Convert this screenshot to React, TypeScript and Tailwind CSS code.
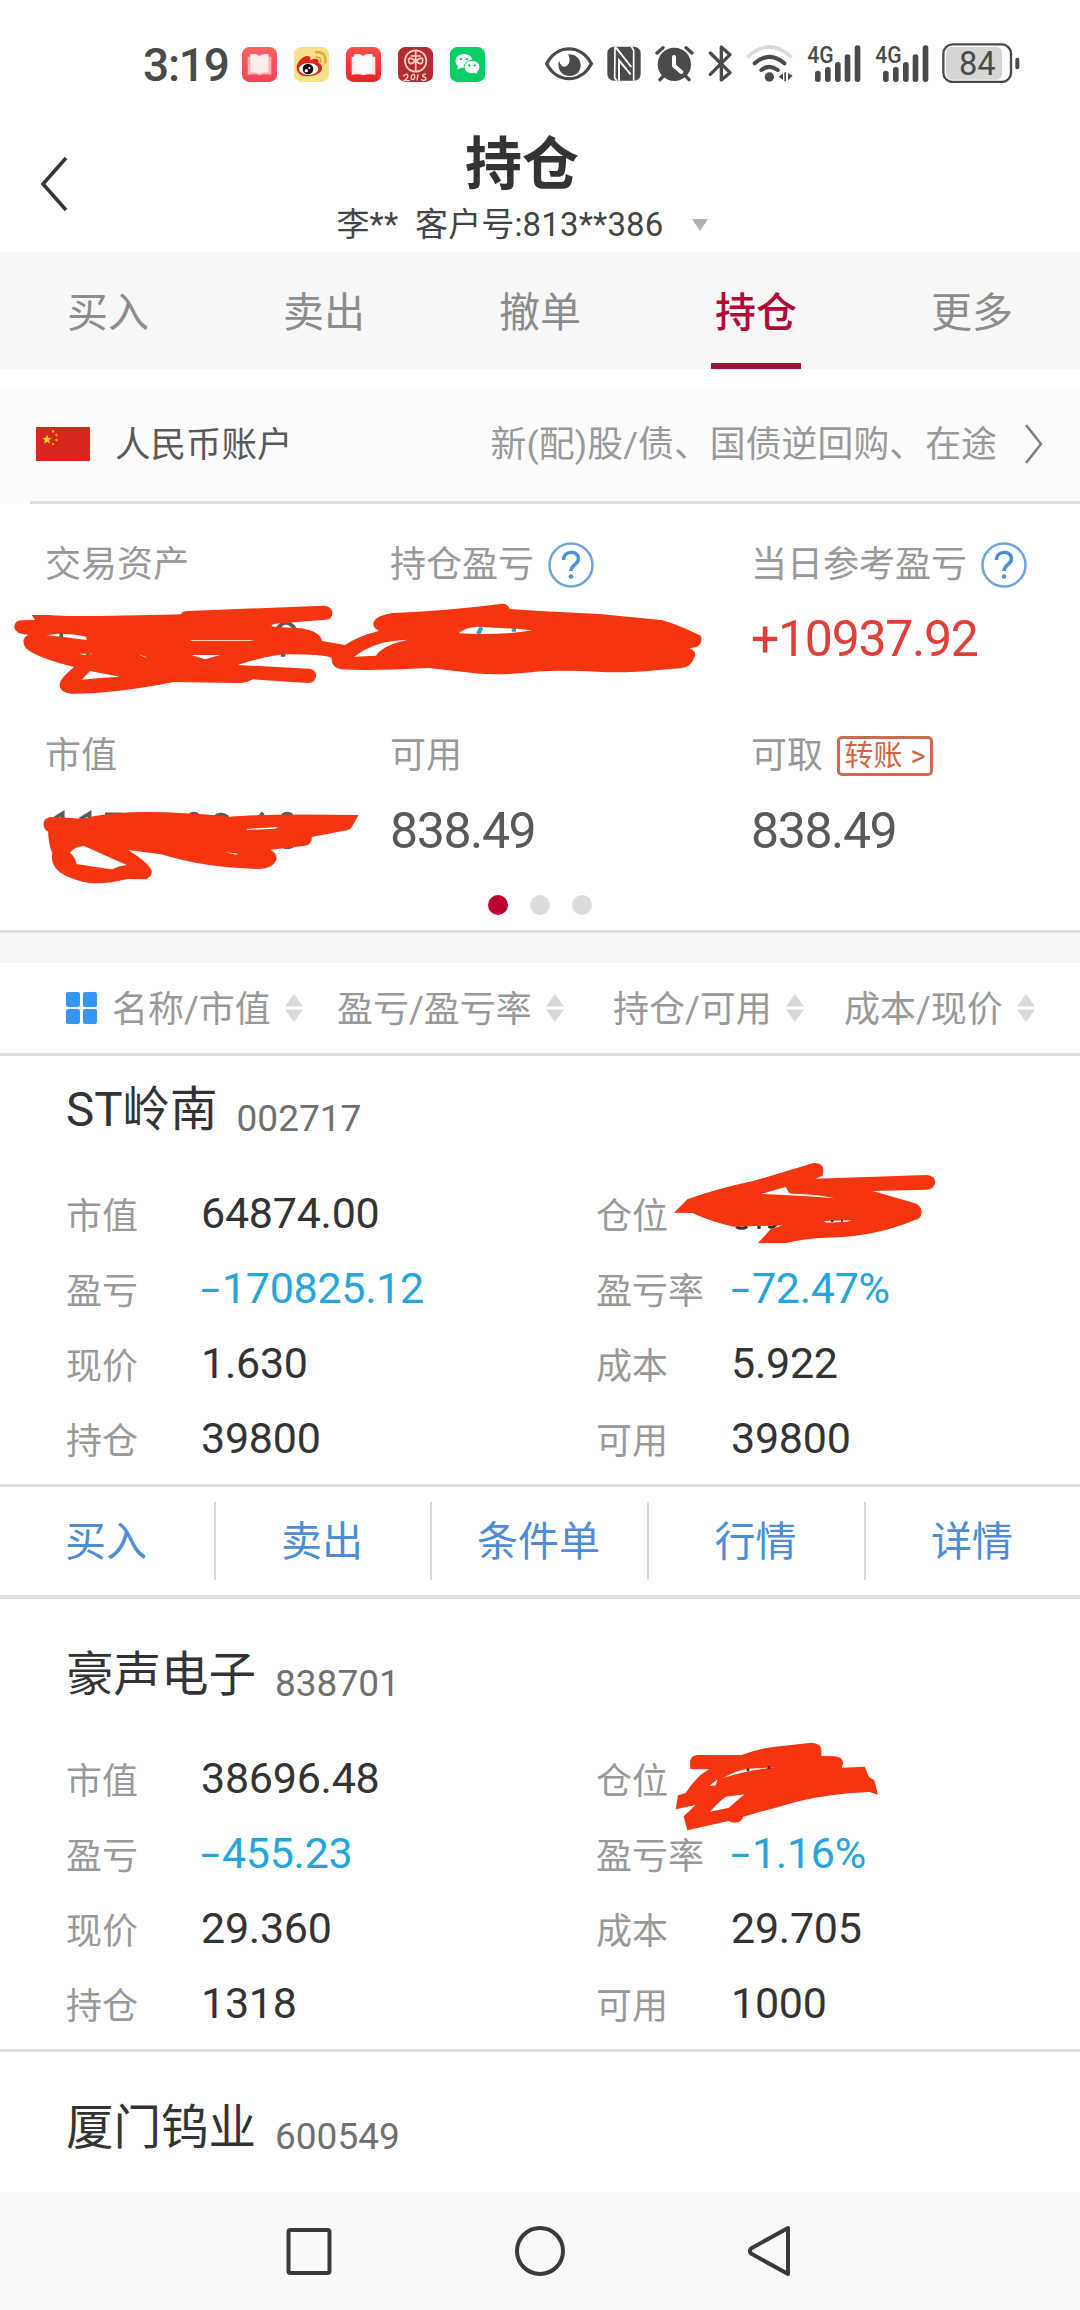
import type { ReactNode } from 'react';

const tabs = ['买入', '卖出', '撤单', '持仓', '更多'];

const columns = [
  { label: '名称/市值', width: 'w-[225px]' },
  { label: '盈亏/盈亏率', width: 'w-[276px]' },
  { label: '持仓/可用', width: 'w-[231px]' },
  { label: '成本/现价', width: 'w-[200px]' },
];

const actions = ['买入', '卖出', '条件单', '行情', '详情'];

const holdings = [
  {
    name: 'ST岭南',
    code: '002717',
    rows: [
      ['市值', '64874.00', '仓位', ''],
      ['盈亏', '-170825.12', '盈亏率', '-72.47%'],
      ['现价', '1.630', '成本', '5.922'],
      ['持仓', '39800', '可用', '39800'],
    ],
  },
  {
    name: '豪声电子',
    code: '838701',
    rows: [
      ['市值', '38696.48', '仓位', ''],
      ['盈亏', '-455.23', '盈亏率', '-1.16%'],
      ['现价', '29.360', '成本', '29.705'],
      ['持仓', '1318', '可用', '1000'],
    ],
  },
];

function BookIcon({ from, to, page }: { from: string; to: string; page: string }) {
  const id = `book-${from.slice(1)}`;
  return (
    <svg viewBox="0 0 105 105" className="size-[35px]">
      <defs>
        <linearGradient id={id} x1="0" y1="0" x2="0" y2="1">
          <stop offset="0" stopColor={from} />
          <stop offset="1" stopColor={to} />
        </linearGradient>
      </defs>
      <rect width="105" height="105" rx="22" fill={`url(#${id})`} />
      <path d="M17 29 L24 29 L25 22 Q42 18 52 27 Q62 18 79 22 L81 29 L88 29 V83 Q66 80 52 85 Q38 80 17 83Z" fill={page} />
      <path d="M25 22 Q42 18 52 27 Q62 18 79 22 V76 Q62 74 52 80 Q42 74 25 76Z" fill="#fff" fillOpacity="0.75" />
    </svg>
  );
}

function WeiboIcon() {
  return (
    <svg viewBox="0 0 105 105" className="size-[35px]">
      <rect width="105" height="105" rx="22" fill="#fbe08a" />
      <path d="M8 62 C8 42 32 22 45 28 C52 31 47 39 50 40 C60 32 77 33 73 47 C92 55 90 84 44 88 C22 89 8 78 8 62Z" fill="#e2231a" />
      <ellipse cx="44" cy="66" rx="29" ry="18" fill="#fff" />
      <circle cx="42" cy="66" r="16" fill="#111" />
      <circle cx="37" cy="71" r="5" fill="#fff" />
      <circle cx="46" cy="63" r="3" fill="#fff" />
      <path d="M66 15 Q98 14 94 47" fill="none" stroke="#e8a33d" strokeWidth="7" strokeLinecap="round" />
      <path d="M67 31 Q82 29 80 45" fill="none" stroke="#e8a33d" strokeWidth="6" strokeLinecap="round" />
    </svg>
  );
}

function UnionIcon() {
  return (
    <svg viewBox="0 0 105 105" className="size-[35px]">
      <rect width="105" height="105" rx="22" fill="#b42b36" />
      <g fill="none" stroke="#ffd9bd" strokeWidth="5">
        <circle cx="53" cy="42" r="32" />
        <path d="M53 10V74M38 27H68M53 42 Q30 25 32 42 Q34 58 53 42 Q76 25 74 42 Q72 58 53 42" />
        <path d="M16 88 Q26 78 29 84 Q32 92 19 101 H36 M42 84 Q36 98 44 98 Q52 96 50 84 Q46 80 42 84 M60 82 L57 100 M84 82 Q72 80 74 88 Q88 92 82 99 Q72 102 70 96" strokeWidth="4" />
      </g>
    </svg>
  );
}

function WechatIcon() {
  return (
    <svg viewBox="0 0 105 105" className="size-[35px]">
      <rect width="105" height="105" rx="22" fill="#06cf63" />
      <ellipse cx="42" cy="42" rx="26" ry="21" fill="#fff" />
      <path d="M24 54 L22 68 L36 61Z" fill="#fff" />
      <ellipse cx="66" cy="60" rx="24" ry="20" fill="#fff" stroke="#06cf63" strokeWidth="3" />
      <path d="M72 76 L82 82 L80 70Z" fill="#fff" />
      <circle cx="33" cy="36" r="4" fill="#06cf63" />
      <circle cx="51" cy="36" r="4" fill="#06cf63" />
      <circle cx="58" cy="55" r="3.5" fill="#06cf63" />
      <circle cx="74" cy="55" r="3.5" fill="#06cf63" />
    </svg>
  );
}

function SignalIcon() {
  return (
    <svg viewBox="862 25 162 135" className="-mt-[5px] h-[45px] w-[54px] overflow-visible fill-[#4a4a4a]">
      <text x="863" y="101" textLength="79" lengthAdjust="spacingAndGlyphs" className="font-medium" fontSize="71">
        4G
      </text>
      <rect x="886" y="123" width="17" height="34" rx="8" />
      <rect x="916" y="112" width="17" height="45" rx="8" />
      <rect x="946" y="97" width="17" height="60" rx="8" />
      <rect x="975" y="74" width="17" height="83" rx="8" />
      <rect x="1005" y="47" width="17" height="110" rx="8" />
    </svg>
  );
}

function StatusBar() {
  return (
    <div className="flex h-[110px] items-start pl-[143px] pt-[43px] text-[#4a4a4a]">
      <span className="w-[99px] text-[46px] font-medium leading-[45px] tracking-[-1.2px]">3:19</span>
      <div className="flex gap-[17px] pt-[4px]">
        <BookIcon from="#f8625f" to="#f0465a" page="#fbb3b4" />
        <WeiboIcon />
        <BookIcon from="#f5504c" to="#ea2226" page="#ffe9e6" />
        <UnionIcon />
        <WechatIcon />
      </div>
      {/* eye comfort */}
      <svg viewBox="74 40 144 120" className="ml-[60px] h-[40px] w-[48px]">
        <path d="M79 102 C110 43 182 43 213 102 C182 162 110 162 79 102Z" fill="none" stroke="#4a4a4a" strokeWidth="10" />
        <path d="M143 74 C166 73 181 88 181 107 C181 126 167 139 148 139 C129 139 114 126 114 104 C114 98 116 96 117 94 C120 110 130 113 137 110 C150 104 150 86 143 74Z" fill="#4a4a4a" />
      </svg>
      {/* nfc */}
      <svg viewBox="261 40 102 120" className="ml-[14px] h-[40px] w-[34px]">
        <rect x="262" y="51" width="100" height="102" rx="20" fill="#4a4a4a" />
        <path d="M285 51 L284 144 L290 153 M334 51 L341 62 V153" stroke="#fff" strokeWidth="5" fill="none" />
        <path d="M297 153 V92 L332 134 M288 54 L334 112" stroke="#fff" strokeWidth="6" fill="none" />
      </svg>
      {/* alarm */}
      <svg viewBox="406 40 117 120" className="ml-[14px] h-[40px] w-[39px]">
        <circle cx="464" cy="104" r="50" fill="#4a4a4a" />
        <path d="M463 82 V108 L485 127" stroke="#fff" strokeWidth="12" fill="none" strokeLinecap="round" strokeLinejoin="round" />
        <path d="M412 70 L430 54 M517 70 L499 54 M421 150 L432 138 M508 150 L497 138" stroke="#4a4a4a" strokeWidth="10" strokeLinecap="round" />
      </svg>
      {/* bluetooth */}
      <svg viewBox="564 40 72 120" className="ml-[14px] h-[40px] w-[24px]">
        <path d="M571 70 L630 129 L604 151 V52 L630 75 L571 134" stroke="#4a4a4a" strokeWidth="10" fill="none" strokeLinecap="round" strokeLinejoin="round" />
      </svg>
      {/* wifi */}
      <svg viewBox="679 40 141 120" className="ml-[14px] h-[40px] w-[47px]">
        <path d="M686 80 Q749 24 812 80" stroke="#dadada" strokeWidth="11" fill="none" strokeLinecap="round" />
        <path d="M705 101 Q749 62 794 101 M725 121 Q749 102 774 121" stroke="#4a4a4a" strokeWidth="12" fill="none" strokeLinecap="round" />
        <circle cx="749" cy="142" r="14" fill="#4a4a4a" />
        <path d="M777 141 L790 131 V151Z M819 138 L805 130 V152Z M794 128 h5 v27 h-5Z" fill="#4a4a4a" />
      </svg>
      <div className="ml-[14px] flex gap-[14px]">
        <SignalIcon />
        <SignalIcon />
      </div>
      {/* battery */}
      <svg viewBox="1270 40 234 120" className="ml-[13px] h-[40px] w-[78px]">
        <rect x="1282" y="52" width="168" height="98" rx="16" fill="#d6d6d6" />
        <rect x="1274" y="44" width="203" height="113" rx="28" fill="none" stroke="#4a4a4a" strokeWidth="7" />
        <rect x="1490" y="84" width="12" height="35" rx="6" fill="#4a4a4a" />
        <text x="1376" y="136" textAnchor="middle" fontSize="98" fill="#4a4a4a">
          84
        </text>
      </svg>
    </div>
  );
}

function Header() {
  return (
    <header className="flex h-[142px] items-start">
      <svg viewBox="0 0 30 60" className="ml-[38px] mt-[44px] h-[60px] w-[30px] shrink-0">
        <path d="M28 4 L5 30 L28 56" fill="none" stroke="#333" strokeWidth="3.500" />
      </svg>
      <div className="flex w-[908px] flex-col items-center">
        <h1 className="mt-[20px] h-[70px] text-[57px] font-bold leading-[70px] text-[#333]">持仓</h1>
        <div className="mt-[1px] flex items-center text-[33px] leading-[47px] text-[#444]">
          <span className="tracking-[0.15px]">李**&nbsp; 客户号:813**386</span>
          <svg viewBox="0 0 16 12" className="ml-[28px] h-[12px] w-[16px]">
            <path d="M0 0H16L8 12Z" fill="#b0b0b0" />
          </svg>
        </div>
      </div>
    </header>
  );
}

function TabBar() {
  return (
    <nav className="grid h-[117px] grid-cols-5 bg-[#f7f7f7] text-[41px]">
      {tabs.map((tab) => (
        <div key={tab} className="flex flex-col items-center">
          <span className={`h-[111px] leading-[122px] ${tab === '持仓' ? 'font-medium text-[#b10a38]' : 'text-[#8c8c8c]'}`}>{tab}</span>
          {tab === '持仓' && <span className="h-[6px] w-[90px] bg-[#a80c32]" />}
        </div>
      ))}
    </nav>
  );
}

function AccountRow() {
  return (
    <div className="mt-[18px] bg-[#fcfcfc]">
      <div className="flex h-[114px] items-center pl-[36px] text-[35.5px]">
        <svg viewBox="0 0 54 34" className="h-[34px] w-[54px]">
          <rect width="54" height="34" fill="#d9261c" />
          <path d="M11 7.5l1.3 3.2 3.4.2-2.6 2.2.9 3.4-3-1.8-3 1.8.9-3.4-2.6-2.2 3.4-.2z" fill="#fbd21b" />
          <g fill="#f5b81b">
            <circle cx="17" cy="4.5" r="1.2" />
            <circle cx="20.500" cy="8" r="1.200" />
            <circle cx="20.500" cy="13" r="1.200" />
            <circle cx="17" cy="17" r="1.200" />
          </g>
        </svg>
        <span className="ml-[25px] pt-[4px] text-[#595959]">人民币账户</span>
        <span className="ml-auto pt-[4px] text-[35.8px] tracking-[0.1px] text-[#999]">新(配)股/债、国债逆回购、在途</span>
        <svg viewBox="0 0 22 42" className="ml-[26px] mr-[35px] h-[42px] w-[22px]">
          <path d="M3 2 L18 21 L3 40" fill="none" stroke="#808080" strokeWidth="2.5" />
        </svg>
      </div>
      <div className="ml-[30px] h-[3px] bg-[#dedede]" />
    </div>
  );
}

function HelpIcon() {
  return (
    <svg viewBox="0 0 46 46" className="ml-[14px] size-[46px]">
      <circle cx="23" cy="23" r="21.500" fill="none" stroke="#6fa3dc" strokeWidth="2.500" />
      <path d="M15.500 18 C15.500 8 30.500 8 30.500 17 C30.500 22 23 23 23 29" fill="none" stroke="#4a8fdc" strokeWidth="3.500" />
      <circle cx="23" cy="34.500" r="2.300" fill="#4a8fdc" />
    </svg>
  );
}

function SummaryLabel({ children }: { children: ReactNode }) {
  return <div className="flex h-[60px] items-center whitespace-nowrap text-[36px] text-[#999]">{children}</div>;
}

/* hand-drawn redaction over the asset figures */
function SummaryScribble() {
  return (
    <svg viewBox="0 0 1030 300" className="absolute left-0 top-[86px] h-[300px] w-[1030px]" fill="#f53510">
      <g transform="translate(0 0) scale(0.3444 0.3333)">
        <g stroke="#5a5a5a" strokeWidth="11" fill="none">
          <path d="M178 125V150M806 115 Q830 82 856 115" />
          <path d="M255 185V197M815 195H828" />
          <path d="M160 684 L182 670V690M232 688 L260 670V690M305 673H355M552 676 Q562 666 575 676M622 682 Q641 664 662 682M755 680L764 668M820 676Q834 666 848 676M820 768 Q834 776 850 768" />
        </g>
        <path d="M1398 112L1388 132M1492 112V125" stroke="#2e9fd8" strokeWidth="12" />
        <path
          fillRule="evenodd"
          d="M92 75 L145 75 Q200 82 525 73 Q530 63 545 63 L940 47 Q965 50 965 68 Q965 88 945 89 L800 101 Q780 106 795 110 L875 115 Q930 125 935 153 L1002 165 Q1040 138 1100 123 Q1080 112 1085 95 Q1095 76 1140 69 Q1300 62 1460 41 Q1475 42 1480 57 L1568 63 L1740 72 L1920 90 Q1960 100 2036 138 Q2040 165 2020 172 L2002 175 Q2024 185 2017 200 Q2008 232 1975 235 L1910 240 Q1850 248 1760 247 Q1640 240 1568 244 Q1450 258 1380 250 L1245 234 Q1080 243 990 238 Q960 230 963 203 Q930 193 840 193 Q790 192 690 225 L900 236 Q918 240 918 257 Q915 278 895 279 L735 268 Q715 280 690 279 L505 276 Q330 312 205 311 Q172 306 173 283 Q175 265 215 231 Q110 205 75 175 Q58 148 82 134 Q45 134 41 112 Q42 92 62 91 L102 90Z
             M168 131 Q215 131 250 140 L252 150 Q195 142 135 136Z
             M228 191 L268 191 L250 196Z
             M400 192 L430 203 Q415 202 400 192Z
             M555 195 L640 195 L595 208Z
             M553 150 H740 L725 152 H553Z
             M262 243 L347 260 Q290 263 237 269Z
             M1028 200 Q1080 160 1142 153 L1185 149 Q1110 165 1092 197Z
             M1332 130 Q1350 112 1385 110 L1510 117 L1545 121 Q1450 137 1332 130Z"
        />
        <path
          fillRule="evenodd"
          d="M126 702 Q128 680 155 681 L240 686 Q300 671 380 667 Q500 663 665 680 Q780 670 1041 675 L1022 710 Q1015 721 995 723 L905 741 Q908 765 880 768 L785 779 Q805 790 803 808 Q795 835 755 837 Q600 835 468 793 L372 780 Q435 820 441 845 Q438 868 415 868 L370 867 Q290 887 240 875 Q140 850 152 790 Q140 760 140 725 Q128 720 126 702Z
             M203 788 Q215 770 244 768 L368 825 Q345 827 325 838 Q280 832 222 822 Q218 800 203 788Z
             M715 717 L808 711 L800 716 L720 720Z
             M655 787 L692 791 L685 794Z"
        />
      </g>
    </svg>
  );
}

function Summary() {
  return (
    <section className="relative h-[429px] border-b-[3px] border-[#dedede] pt-[31px]">
      <div className="grid grid-cols-[345px_361px_1fr] pl-[45px]">
        <SummaryLabel>交易资产</SummaryLabel>
        <SummaryLabel>
          持仓盈亏
          <HelpIcon />
        </SummaryLabel>
        <SummaryLabel>
          当日参考盈亏
          <HelpIcon />
        </SummaryLabel>
        <span className="col-start-3 mt-[14px] h-[60px] text-[50px] leading-[60px] tracking-[-1.3px] text-[#de4039]">+10937.92</span>
      </div>
      <div className="mt-[57px] grid grid-cols-[345px_361px_1fr] pl-[45px] text-[#595959]">
        <SummaryLabel>市值</SummaryLabel>
        <SummaryLabel>可用</SummaryLabel>
        <SummaryLabel>
          可取
          <span className="ml-[14px] flex h-[40px] w-[96px] items-center justify-center rounded-[5px] border-[3px] border-[#cc6b50] pt-[2px] text-[29px] text-[#d26445]">
            转账<span className="ml-[8px]">&gt;</span>
          </span>
        </SummaryLabel>
        <span className="col-start-2 mt-[15px] h-[60px] text-[50px] leading-[60px] tracking-[-1.4px]">838.49</span>
        <span className="mt-[15px] h-[60px] text-[50px] leading-[60px] tracking-[-1.4px]">838.49</span>
      </div>
      <div className="mt-[34px] flex justify-center gap-[22px]">
        <i className="size-[20px] rounded-full bg-[#bb0030]" />
        <i className="size-[20px] rounded-full bg-[#dcdcdc]" />
        <i className="size-[20px] rounded-full bg-[#dcdcdc]" />
      </div>
      <SummaryScribble />
    </section>
  );
}

function SortIcon() {
  return (
    <svg viewBox="0 0 18 28" className="ml-[14px] h-[28px] w-[18px]">
      <path d="M9 0L18 12.500H0ZM0 15.500H18L9 28Z" fill="#d9d9d9" />
    </svg>
  );
}

function ColumnHeader() {
  return (
    <div className="mt-[30px] flex h-[93px] items-center border-b-[3px] border-[#dedede] bg-white pl-[66px] text-[36px] text-[#999]">
      <svg viewBox="0 0 31 32" className="mr-[15px] h-[32px] w-[31px] fill-[#3595f3]">
        <rect width="14" height="15" rx="2" />
        <rect x="17" width="14" height="15" rx="2" />
        <rect y="17" width="14" height="15" rx="2" />
        <rect x="17" y="17" width="14" height="15" rx="2" />
      </svg>
      {columns.map((column) => (
        <div key={column.label} className={`flex shrink-0 items-center whitespace-nowrap ${column.width}`}>
          <span className="pt-[3px]">{column.label}</span>
          <SortIcon />
        </div>
      ))}
    </div>
  );
}

function FirstScribble() {
  return (
    <svg viewBox="0 0 870 330" className="absolute left-[-71px] top-[-26px] h-[110px] w-[290px]">
      <path d="M228 230 Q245 240 262 230M292 232H302M325 228 Q338 238 350 222" stroke="#333" strokeWidth="9" fill="none" />
      <path
        fill="#f53510"
        fillRule="evenodd"
        d="M42 188 L82 148 Q180 113 280 93 L460 39 Q490 38 490 60 L488 77 L465 86 L800 75 Q826 78 826 97 Q822 118 800 119 L638 123 L765 160 Q785 168 785 188 Q782 207 765 210 Q640 262 500 263 Q430 265 380 279 L294 279 L332 238 L368 226 L222 230 Q150 215 98 189Z
           M303 132 L378 110 Q383 128 395 131 Q470 132 524 145 Q440 137 303 132Z
           M490 213 L575 211 L560 215 L500 218Z"
      />
      <path d="M513 213H520M543 212H549" stroke="#333" strokeWidth="6" />
    </svg>
  );
}

function SecondScribble() {
  return (
    <svg viewBox="0 0 870 330" className="absolute left-[-71px] top-[-7px] h-[110px] w-[290px]">
      <path
        fill="#f53510"
        fillRule="evenodd"
        d="M91 105 L90 82 Q95 62 115 63 L245 63 Q290 45 345 38 L455 26 Q485 28 484 50 L484 66 L525 67 Q550 70 549 90 L545 101 L614 98 L627 129 L643 139 L654 182 L628 174 Q500 180 410 203 L250 248 Q243 270 215 265 L205 261 L82 289 L71 247 L107 213 L47 226 L54 184 L77 177 Q110 125 148 106Z
           M148 156 L173 136 L167 154Z
           M190 132 Q220 112 262 104 L347 100 Q255 110 190 132Z
           M150 233 Q175 205 197 188 L254 181 Q230 200 207 221Z"
      />
      <path d="M264 103V112M323 101H331" stroke="#5a2018" strokeWidth="8" />
    </svg>
  );
}

function Amount({ value }: { value: string }) {
  if (!value.startsWith('-')) {
    return <span className="tracking-[-0.25px] text-[#333]">{value}</span>;
  }
  return (
    <span className="flex tracking-[-0.3px] text-[#25a5dc]">
      <span className="w-[21px] origin-left scale-x-[1.6]">-</span>
      {value.slice(1)}
    </span>
  );
}

function Title({ name, code }: { name: string; code: string }) {
  return (
    <div className="flex h-[60px] items-center pl-[66px]">
      <span className="mt-[2px] text-[47.5px] text-[#333]">{name}</span>
      <span className="ml-[19px] mt-[17px] text-[37px] text-[#707070]">{code}</span>
    </div>
  );
}

function Holding({ index }: { index: number }) {
  const { name, code, rows } = holdings[index];
  return (
    <section className={`border-b-[3px] border-[#dedede] pb-[8px] ${index === 0 ? 'pt-[24px]' : 'pt-[46px]'}`}>
      <Title name={name} code={code} />
      <div className="mt-[36px]">
        {rows.map(([label, value, label2, value2], i) => (
          <div key={label} className="grid h-[75px] grid-cols-[135px_395px_135px_1fr] grid-rows-[75px] items-start pl-[66px] text-[43px] leading-[75px]">
            <span className="pt-[4px] text-[36px] text-[#999]">{label}</span>
            <Amount value={value} />
            <span className="pt-[4px] text-[36px] text-[#999]">{label2}</span>
            <div className="relative h-[75px]">
              <Amount value={value2} />
              {i === 0 && (index === 0 ? <FirstScribble /> : <SecondScribble />)}
            </div>
          </div>
        ))}
      </div>
    </section>
  );
}

function Actions() {
  return (
    <div className="grid h-[112px] grid-cols-[216px_216px_217px_217px_1fr] items-center border-b-[4px] border-[#dedede] text-[41px] text-[#4d8dd6]">
      {actions.map((action) => (
        <div key={action} className="flex h-[78px] items-center justify-center border-r-2 border-[#d9d9d9] pr-[2px] pt-[4px] last:border-r-0">
          {action}
        </div>
      ))}
    </div>
  );
}

function NavBar() {
  return (
    <div className="flex h-[118px] items-center bg-[#fafafa] pl-[284px]">
      <svg viewBox="0 0 50 54" className="h-[54px] w-[50px]" fill="none" stroke="#3a3a3a" strokeWidth="4">
        <rect x="4.500" y="6" width="41" height="43" rx="2" />
      </svg>
      <svg viewBox="0 0 54 54" className="ml-[179px] size-[54px]" fill="none" stroke="#3a3a3a" strokeWidth="4">
        <circle cx="27" cy="27" r="23" />
      </svg>
      <svg viewBox="0 0 54 54" className="ml-[181px] size-[54px]" fill="none" stroke="#3a3a3a" strokeWidth="4" strokeLinejoin="round">
        <path d="M40 4V50L3 29.500Q1 27 3 24.500Z" />
      </svg>
    </div>
  );
}

export default function App() {
  return (
    <main className="flex h-[2310px] w-[1080px] flex-col overflow-hidden bg-white font-['Roboto','Noto_Sans_CJK_SC',sans-serif]">
      <StatusBar />
      <Header />
      <TabBar />
      <AccountRow />
      <Summary />
      <div className="bg-[#f6f6f6]">
        <ColumnHeader />
      </div>
      <Holding index={0} />
      <Actions />
      <Holding index={1} />
      <div className="h-[140px] pt-[46px]">
        <Title name="厦门钨业" code="600549" />
      </div>
      <NavBar />
    </main>
  );
}
